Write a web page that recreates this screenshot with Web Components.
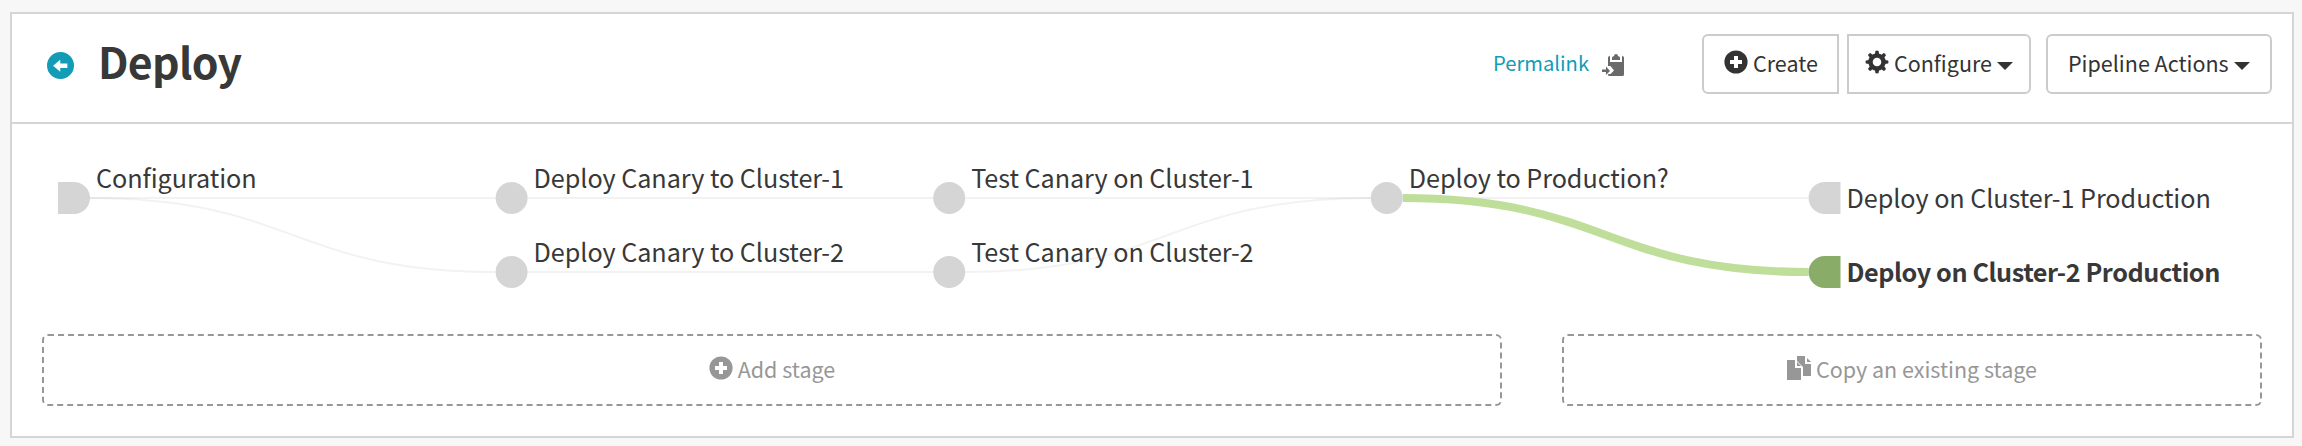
<!DOCTYPE html>
<html lang="en">
<head>
<meta charset="utf-8">
<title>Deploy</title>
<style>
html,body{margin:0;height:100%}
body{background:#f7f7f7;color:#383838;font-family:"Noto Sans CJK SC","Noto Sans",sans-serif;box-sizing:border-box;padding:12px 8px 8px 10px;overflow:hidden}
</style>
</head>
<body>
<pipeline-panel>
  <pipeline-header slot="header" heading="Deploy">
    <perma-link>Permalink</perma-link>
    <tool-button kind="first" style="width:137px;margin-left:76px"><ui-icon slot="icon" name="plus"></ui-icon>Create</tool-button>
    <tool-button kind="last" caret style="width:184px;margin-left:8px"><ui-icon slot="icon" name="gear"></ui-icon>Configure</tool-button>
    <tool-button caret style="width:226px;margin-left:15px">Pipeline Actions</tool-button>
  </pipeline-header>
  <pipeline-graph></pipeline-graph>
  <stage-actions slot="actions">
    <stage-action style="width:1460px"><ui-icon slot="icon" name="plus"></ui-icon>Add stage</stage-action>
    <stage-action style="width:700px"><ui-icon slot="icon" name="copy"></ui-icon>Copy an existing stage</stage-action>
  </stage-actions>
</pipeline-panel>
<script>
const define = (name, html, after) => {
  const t = document.createElement('template');
  t.innerHTML = html;
  customElements.define(name, class extends HTMLElement {
    constructor() {
      super();
      this.attachShadow({mode: 'open'}).appendChild(t.content.cloneNode(true));
    }
    connectedCallback() { if (after) after(this, this.shadowRoot); }
  });
};

const teeth = Array.from({length: 8}, (_, i) =>
  `<path transform="rotate(${i * 45} 12 12)" d="M9.9 4.5 10.4 .9Q12 .1 13.6 .9L14.1 4.5Z"/>`).join('');
const icons = {
  plus: '<path fill-rule="evenodd" d="M12 .4a11.6 11.6 0 1 0 0 23.2a11.6 11.6 0 1 0 0-23.2ZM10 6h4v4h4v4h-4v4h-4v-4H6v-4h4Z"/>',
  gear: teeth + '<path fill-rule="evenodd" d="M12 3.3a8.7 8.7 0 1 0 0 17.4a8.7 8.7 0 1 0 0-17.4ZM12 7.7a4.3 4.3 0 1 1 0 8.6a4.3 4.3 0 1 1 0-8.6Z"/>',
  copy: '<path d="M0 4h8v8h6v12H0ZM10 0h8v8h6v12h-8v-9l-6-6ZM10 6l4 4h-4ZM20 2l4 4h-4Z"/>',
  back: '<path fill-rule="evenodd" d="M12 0a12 12 0 1 0 0 24a12 12 0 1 0 0-24ZM11.8 6.8v3.4h6.3v4h-6.3v3.4L5.4 12.2Z"/>',
  clip: '<path d="M6 3.5Q6 2 8 2v6h12V2q2 0 2 1.500V20.500Q22 22 20.500 22H7.500Q6 22 6 20.500V20h2.500l3.500-3.500L8.500 12H6ZM10 6V3.500q0-1 2-1.500Q12 0 14 0q2 0 2 2q2 .5 2 1.500V6ZM0 15.500h4v-3l4 4.500-4 4v-3H0Z"/>'
};
define('ui-icon', `<style>:host{display:block;width:24px;height:24px;flex:none}svg{display:block;width:100%;height:100%;fill:currentColor}</style><svg viewBox="0 0 24 24"></svg>`,
  (el, root) => root.querySelector('svg').innerHTML = icons[el.getAttribute('name')]);

define('pipeline-panel', `<style>
:host{display:flex;flex-direction:column;box-sizing:border-box;height:426px;border:2px solid #d5d5d5;background:#fff}
</style><slot name="header"></slot><slot></slot><slot name="actions"></slot>`);

define('pipeline-header', `<style>
:host{display:flex;box-sizing:border-box;height:110px;padding:16px 20px 0 35px;border-bottom:2px solid #d5d5d5;align-items:flex-start}
ui-icon{width:27px;height:27px;color:#139cb5;margin-top:22px}
h1{margin:0 auto 0 24px;font-size:42.8px;line-height:61px;font-weight:700;letter-spacing:-.7px;white-space:nowrap}
::slotted(*){margin-top:4px}
</style><ui-icon name="back"></ui-icon><h1></h1><slot></slot>`,
  (el, root) => root.querySelector('h1').textContent = el.getAttribute('heading'));

define('perma-link', `<style>
:host{display:flex;color:#139cb5;font-size:20.2px;line-height:58px;height:60px;white-space:nowrap}
span{width:109px}
ui-icon{color:#6a6a6a;margin-top:20px}
</style><span><slot></slot></span><ui-icon name="clip"></ui-icon>`);

define('tool-button', `<style>
:host{display:flex;box-sizing:border-box;height:60px;border:2px solid #ccc;border-radius:6px;align-items:center;padding-left:20px;font-size:21.5px;line-height:54px;color:#333;white-space:nowrap}
:host([kind=first]){border-radius:6px 0 0 6px}
:host([kind=last]){border-radius:0 6px 6px 0;padding-left:16px}
::slotted(ui-icon){margin:-4px 5px 0 0}
span{padding-bottom:2px}
i{display:none;border:8px solid transparent;border-top-color:currentColor;border-bottom:0;margin:4px 0 0 5px}
:host([caret]) i{display:block}
</style><slot name="icon"></slot><span><slot></slot></span><i></i>`);

define('stage-actions', `<style>:host{display:flex;gap:60px;padding:0 0 30px 30px}</style><slot></slot>`);
define('stage-action', `<style>
:host{display:flex;box-sizing:border-box;height:72px;border:2px dashed #979797;border-radius:6px;align-items:center;justify-content:center;color:#979797;font-size:21.5px;line-height:66px;white-space:nowrap}
::slotted(ui-icon){margin:-4px 5px 0 0}
span{padding-bottom:2px}
</style><slot name="icon"></slot><span><slot></slot></span>`);

const X = [74, 511.6, 949.2, 1386.8, 1824.6], Y = [198, 272];
const link = (a, r, b, s, cls = '') => {
  const x1 = X[a] + 16, x2 = X[b] - 16, m = (x1 + x2) / 2;
  return `<path class="link ${cls}" d="M${x1} ${Y[r]}C${m} ${Y[r]} ${m} ${Y[s]} ${x2} ${Y[s]}"/>`;
};
const node = (c, r, text, cls = '') => {
  const x = X[c], y = Y[r];
  const d = c === 0 ? `M58 ${y - 16}H${x}a16 16 0 0 1 0 32H58Z`
    : c === 4 ? `M1840.500 ${y - 16}H${x}a16 16 0 0 0 0 32H1840.500Z`
    : `M${x - 16} ${y}a16 16 0 0 1 32 0a16 16 0 0 1-32 0Z`;
  return `<g class="${cls}"><path class="node" d="${d}"/><text x="${c === 4 ? 1846.500 : x + 22}" y="${c === 4 ? y + 10 : y - 10}">${text}</text></g>`;
};
define('pipeline-graph', `<style>
:host{display:block;height:210px}
svg{display:block;width:100%;height:100%}
text{font-size:25.2px;letter-spacing:-.05px;fill:#383838}
.node{fill:#d5d5d5}
.link{fill:none;stroke:#000;stroke-opacity:.05;stroke-width:2}
.link.active{stroke:#bfde99;stroke-opacity:1;stroke-width:8}
.active text{font-weight:700;letter-spacing:-.42px}
.active .node{fill:#89ad68}
</style><svg viewBox="12 124 2280 210">${
  link(0,0,1,0) + link(0,0,1,1) + link(1,0,2,0) + link(1,1,2,1) + link(2,0,3,0) + link(2,1,3,0) + link(3,0,4,0) + link(3,0,4,1,'active') +
  node(0,0,'Configuration') + node(1,0,'Deploy Canary to Cluster-1') + node(1,1,'Deploy Canary to Cluster-2') +
  node(2,0,'Test Canary on Cluster-1') + node(2,1,'Test Canary on Cluster-2') + node(3,0,'Deploy to Production?') +
  node(4,0,'Deploy on Cluster-1 Production') + node(4,1,'Deploy on Cluster-2 Production','active')
}</svg>`);
</script>
</body>
</html>
